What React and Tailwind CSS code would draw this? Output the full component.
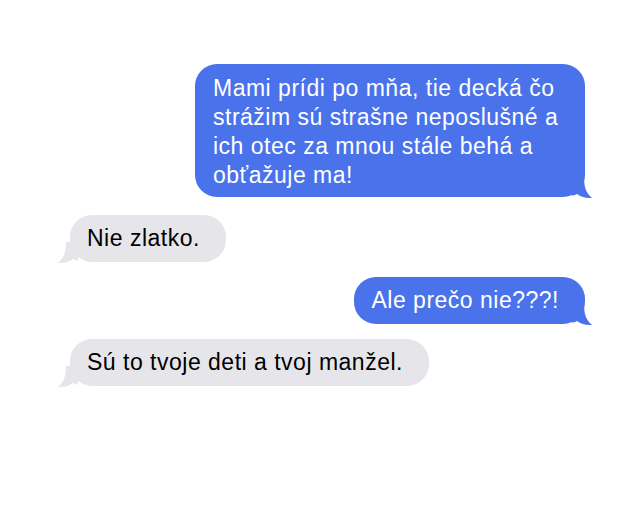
import React from "react";

const MESSAGES = [
  { from: "me", lines: ["Mami prídi po mňa, tie decká čo", "strážim sú strašne neposlušné a", "ich otec za mnou stále behá a", "obťažuje ma!"] },
  { from: "them", lines: ["Nie zlatko."] },
  { from: "me", lines: ["Ale prečo nie???!"] },
  { from: "them", lines: ["Sú to tvoje deti a tvoj manžel."] },
];

function Tail({ side, color }) {
  if (side === "right") {
    return (
      <svg
        className="absolute -right-[9px] -bottom-[2px]"
        width="22"
        height="22"
        viewBox="0 0 22 22"
      >
        <path d="M0 0 H12 C12 10 14 16 20 21 C14 21.5 9 20 5 17 C3 18 1 18.5 0 18.5 Z" fill={color} />
      </svg>
    );
  }
  return (
    <svg
      className="absolute -left-[14px] -bottom-[2px]"
      width="22"
      height="22"
      viewBox="0 0 22 22"
    >
      <path d="M22 0 H10 C10 10 8 16 2 21 C8 21.5 13 20 17 17 C19 18 21 18.5 22 18.5 Z" fill={color} />
    </svg>
  );
}

function Bubble({ msg, first }) {
  const mine = msg.from === "me";
  const multi = msg.lines.length > 1;
  let box = "relative rounded-[22px] ";
  box += mine ? "bg-[#4a72ea] text-white " : "bg-[#e6e6ea] text-black ";
  box += multi ? "w-[390px] pl-[18px] pt-[10px] pb-[7px]" : "pl-[17px] pr-[26px] py-[9px]";

  return (
    <div className={(mine ? "flex justify-end pr-[55px]" : "flex justify-start pl-[70px]") + (first ? "" : "")}>
      <div className={box}>
        <p className="text-[23px] leading-[29px] tracking-[0.5px] whitespace-nowrap">
          {msg.lines.map((l, i) => (
            <span key={i} className="block">{l}</span>
          ))}
        </p>
        <Tail side={mine ? "right" : "left"} color={mine ? "#4a72ea" : "#e6e6ea"} />
      </div>
    </div>
  );
}

export default function App() {
  return (
    <div
      className="w-[640px] h-[518px] bg-white pt-[64px] flex flex-col gap-[15px]"
      style={{ fontFamily: '"Liberation Sans", Arial, sans-serif' }}
    >
      <Bubble msg={MESSAGES[0]} />
      <div className="mt-[3px]">
        <Bubble msg={MESSAGES[1]} />
      </div>
      <Bubble msg={MESSAGES[2]} />
      <Bubble msg={MESSAGES[3]} />
    </div>
  );
}
